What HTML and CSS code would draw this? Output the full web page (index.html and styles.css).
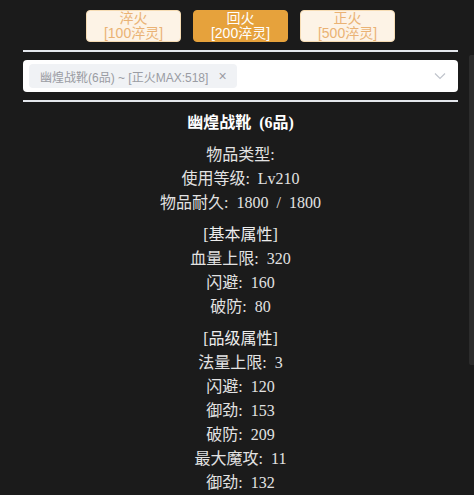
FILE: index.html
```html
<!DOCTYPE html>
<html lang="zh-CN">

<head>
  <meta charset="UTF-8">
  <title>装备淬炼</title>
  <link rel="stylesheet" href="styles.css">
</head>

<body>
  <div class="panel">
    <div class="tabs">
      <div class="btn">淬火<br>[100淬灵]</div>
      <div class="btn active">回火<br>[200淬灵]</div>
      <div class="btn">正火<br>[500淬灵]</div>
    </div>
    <div class="divider"></div>
    <div class="select">
      <span class="tag">幽煌战靴(6品) ~ [正火MAX:518]<i class="close">×</i></span>
      <svg class="arrow" width="12" height="8" viewBox="0 0 12 8">
        <path d="M1 1.5 L6 6.5 L11 1.5" fill="none" stroke="#c0c4cc" stroke-width="1.2" />
      </svg>
    </div>
    <div class="divider"></div>
    <div class="info">
      <div class="title">幽煌战靴 (6品)</div>
      <div class="group">
        <p>物品类型:</p>
        <p>使用等级: Lv210</p>
        <p>物品耐久: 1800 / 1800</p>
      </div>
      <div class="group">
        <p class="head">[基本属性]</p>
        <p>血量上限: 320</p>
        <p>闪避: 160</p>
        <p>破防: 80</p>
      </div>
      <div class="group">
        <p class="head">[品级属性]</p>
        <p>法量上限: 3</p>
        <p>闪避: 120</p>
        <p>御劲: 153</p>
        <p>破防: 209</p>
        <p>最大魔攻: 11</p>
        <p>御劲: 132</p>
      </div>
    </div>
  </div>
  <div class="scroll-thumb"></div>
</body>

</html>
```

FILE: styles.css
```css
html,
body {
  height: 100%;
}

body {
  margin: 0;
  overflow: hidden;
  background-color: #1b1b1b;
  font-family: 'Liberation Serif', 'Noto Sans CJK SC', serif;
  color: #e2e2e2;
}

.panel {
  padding: 10px 16px 0 23px;
}

.tabs {
  display: flex;
  justify-content: center;
  gap: 12px;
}

.btn {
  width: 95px;
  height: 32px;
  box-sizing: border-box;
  display: flex;
  flex-direction: column;
  justify-content: center;
  align-items: center;
  text-align: center;
  font-family: 'Liberation Sans', 'Noto Sans CJK SC', sans-serif;
  font-size: 14px;
  line-height: 15px;
  color: #eab274;
  background-color: #fdf3e6;
  border: 1px solid #f6dcb4;
  border-radius: 4px;
}

.btn.active {
  color: #fff;
  background-color: #e6a23c;
  border-color: #e6a23c;
}

.divider {
  height: 2px;
  margin: 8px 0;
  background-color: #e4e7ed;
}

.select {
  height: 32px;
  box-sizing: border-box;
  display: flex;
  align-items: center;
  justify-content: space-between;
  padding: 0 12px 0 6px;
  background-color: #fff;
  border-radius: 4px;
}

.tag {
  display: flex;
  align-items: center;
  height: 24px;
  padding: 0 10px 0 11px;
  background-color: #f0f2f5;
  border-radius: 4px;
  font-family: 'Liberation Sans', 'Noto Sans CJK SC', sans-serif;
  font-size: 12px;
  color: #9a9ca3;
}

.close {
  font-style: normal;
  font-family: 'Liberation Sans', sans-serif;
  font-size: 14px;
  margin-left: 10px;
}

.arrow {
  display: block;
}

.info {
  margin-top: 9px;
  text-align: center;
  font-size: 16px;
  line-height: 24px;
  word-spacing: 4px;
}

.title {
  font-weight: 700;
  color: #fff;
}

.group {
  margin-top: 8px;
}

.group p {
  margin: 0;
}

.group .head {
  color: #ececec;
}

.scroll-thumb {
  position: absolute;
  top: 55px;
  right: 0;
  width: 5px;
  height: 310px;
  background-color: #2c2c2c;
  border-radius: 2px 0 0 2px;
}
```
